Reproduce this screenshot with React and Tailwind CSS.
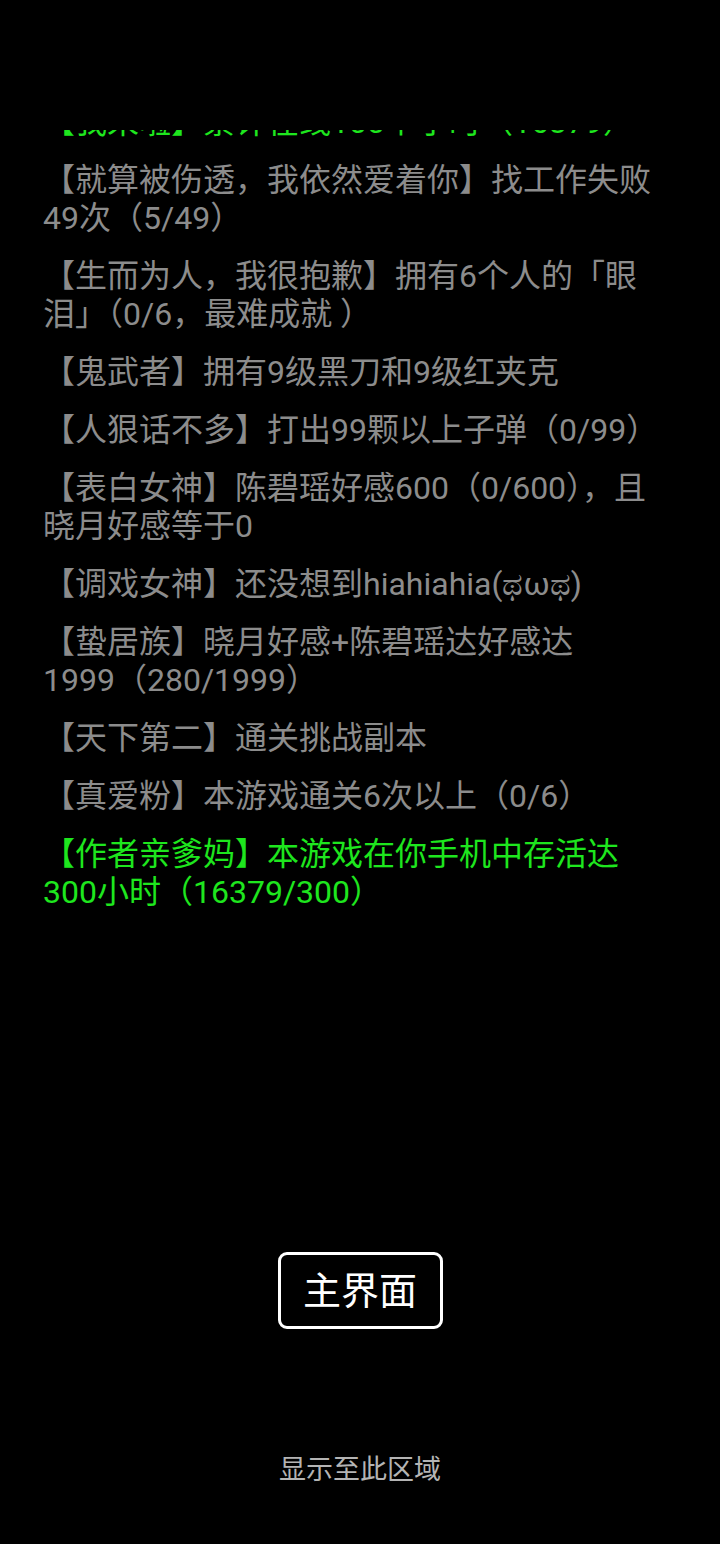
import React from 'react';

// each entry keeps the reference's own line breaks
const items = [
  { lines: ['【我来啦】累计在线100个小时（16379）'], green: true },
  { lines: ['【就算被伤透，我依然爱着你】找工作失败', '49次（5/49）'] },
  { lines: ['【生而为人，我很抱歉】拥有6个人的「眼', '泪」（0/6，最难成就 ）'] },
  { lines: ['【鬼武者】拥有9级黑刀和9级红夹克'] },
  { lines: ['【人狠话不多】打出99颗以上子弹（0/99）'] },
  { lines: ['【表白女神】陈碧瑶好感600（0/600），且', '晓月好感等于0'] },
  { lines: ['【调戏女神】还没想到hiahiahia(ಥωಥ)'] },
  { lines: ['【蛰居族】晓月好感+陈碧瑶达好感达', '1999（280/1999）'] },
  { lines: ['【天下第二】通关挑战副本'] },
  { lines: ['【真爱粉】本游戏通关6次以上（0/6）'] },
  { lines: ['【作者亲爹妈】本游戏在你手机中存活达', '300小时（16379/300）'], green: true },
];

const App = () => {
  return (
    <div
      className="w-[720px] h-[1544px] bg-black flex flex-col overflow-hidden"
      style={{ fontFamily: 'Roboto, "Noto Sans CJK SC", sans-serif' }}
    >
      {/* scrolled list, top entry cut off by the viewport edge */}
      <div className="mt-[130px] h-[1090px] overflow-hidden">
        <div className="-mt-[27px] flex flex-col gap-5 px-[43px]">
          {items.map((item, i) => (
            <p
              key={i}
              className={`text-[32px] leading-[38px] whitespace-nowrap ${
                item.green ? 'text-[#1ee61e]' : 'text-[#8c8c8c]'
              }`}
            >
              {item.lines.map((line, j) => (
                <span key={j} className="block">
                  {line}
                </span>
              ))}
            </p>
          ))}
        </div>
      </div>

      <div className="flex justify-center mt-[32px]">
        <button className="w-[165px] h-[77px] border-[3px] border-white rounded-[9px] text-white text-[38px] leading-none">
          主界面
        </button>
      </div>

      <div className="mt-[124px] text-center text-[27px] leading-[34px] text-[#b4b4b4]">
        显示至此区域
      </div>
    </div>
  );
};

export default App;
